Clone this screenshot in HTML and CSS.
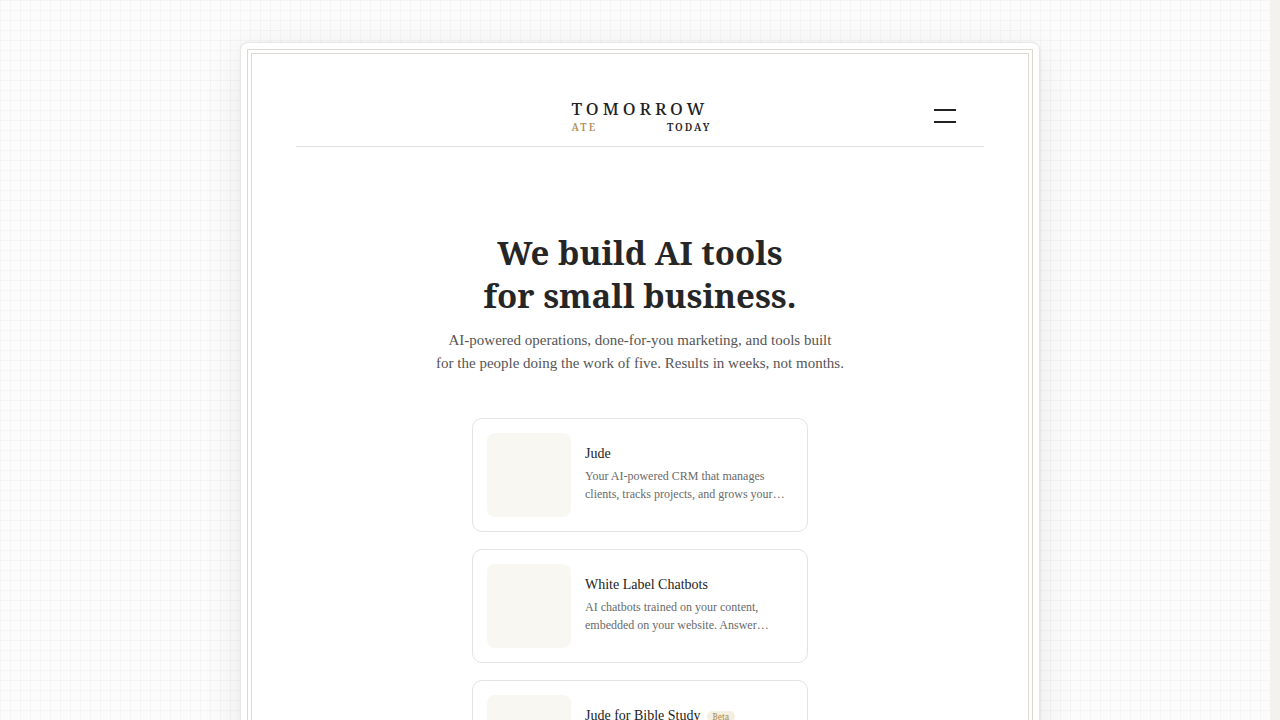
FILE: index.html
```html
<!DOCTYPE html>
<html lang="en">
<head>
<meta charset="utf-8">
<title>Tomorrow Today</title>
<link rel="stylesheet" href="styles.css">
</head>
<body>
<div class="page">
  <div class="sheet">
    <div class="frame-outer">
      <div class="frame-inner">
        <header class="header">
          <div class="header-spacer"></div>
          <a class="logo" href="#">
            <span class="logo-main">TOMORROW</span>
            <span class="logo-sub"><span class="logo-ate">ATE</span><span class="logo-today">TODAY</span></span>
          </a>
          <button class="menu" aria-label="Menu">
            <span class="menu-line"></span>
            <span class="menu-line"></span>
          </button>
        </header>
        <section class="hero">
          <h1 class="hero-title">We build AI tools<br>for small business.</h1>
          <p class="hero-text">AI-powered operations, done-for-you marketing, and tools built<br>for the people doing the work of five. Results in weeks, not months.</p>
        </section>
        <section class="products">
          <a class="product" href="#">
            <div class="product-thumb"></div>
            <div class="product-body">
              <div class="product-title">Jude</div>
              <div class="product-desc">Your AI-powered CRM that manages clients, tracks projects, and grows your business on autopilot.</div>
            </div>
          </a>
          <a class="product" href="#">
            <div class="product-thumb"></div>
            <div class="product-body">
              <div class="product-title">White Label Chatbots</div>
              <div class="product-desc">AI chatbots trained on your content, embedded on your website. Answer questions around the clock.</div>
            </div>
          </a>
          <a class="product" href="#">
            <div class="product-thumb"></div>
            <div class="product-body">
              <div class="product-title">Jude for Bible Study <span class="badge">Beta</span></div>
              <div class="product-desc">A study companion for scripture, notes, and reflection, all in one place.</div>
            </div>
          </a>
        </section>
      </div>
    </div>
  </div>
</div>
<div class="edge"></div>
</body>
</html>
```

FILE: styles.css
```css
* { box-sizing: border-box; }

html, body { margin: 0; padding: 0; }

body {
  background-color: #fcfcfc;
  background-image:
    linear-gradient(to right, rgba(0,0,0,0.028) 1px, transparent 1px),
    linear-gradient(to bottom, rgba(0,0,0,0.028) 1px, transparent 1px);
  background-size: 10px 10px;
  font-family: "Liberation Serif", "DejaVu Serif", serif;
  color: #222;
  height: 720px;
  overflow: hidden;
}

.page {
  display: flex;
  justify-content: center;
  padding-top: 42px;
}

.sheet {
  width: 800px;
  background: #fff;
  border: 1px solid #e6e6e3;
  border-radius: 8px;
  padding: 6px;
  box-shadow: 0 8px 40px rgba(0,0,0,0.08), 0 1px 4px rgba(0,0,0,0.04);
}

.frame-outer {
  border: 1px solid #dcdacf;
  padding: 3px;
}

.frame-inner {
  border: 1px solid #dcdacf;
  padding: 0 44px 40px;
  min-height: 900px;
}

.header {
  display: grid;
  grid-template-columns: 1fr auto 1fr;
  align-items: center;
  padding: 44px 0 13px;
  border-bottom: 1px solid #dddddd;
}

.logo {
  display: flex;
  flex-direction: column;
  text-decoration: none;
  color: #222;
  font-family: "Noto Serif", "DejaVu Serif", serif;
}

.logo-main {
  font-size: 17px;
  font-weight: 500;
  letter-spacing: 4px;
  line-height: 22px;
}

.logo-sub {
  display: flex;
  justify-content: space-between;
  font-size: 10px;
  font-weight: 600;
  letter-spacing: 2px;
  line-height: 12px;
  margin-top: 1px;
}

.logo-ate { color: #b0925a; }
.logo-today { color: #222; margin-right: -3px; }

.menu {
  justify-self: end;
  margin-right: 28px;
  width: 22px;
  height: 14px;
  padding: 0;
  border: 0;
  background: none;
  display: flex;
  flex-direction: column;
  justify-content: space-between;
  cursor: pointer;
}

.menu-line {
  display: block;
  height: 2px;
  background: #222;
}

.hero {
  display: flex;
  flex-direction: column;
  align-items: center;
  text-align: center;
  padding-top: 84px;
}

.hero-title {
  margin: 0;
  font-family: "Noto Serif", "DejaVu Serif", serif;
  font-size: 33px;
  font-weight: 700;
  line-height: 43px;
  color: #262626;
}

.hero-text {
  margin: 12px 0 0;
  font-size: 15px;
  line-height: 23px;
  color: #555;
}

.products {
  display: flex;
  flex-direction: column;
  align-items: center;
  gap: 17px;
  margin-top: 43px;
}

.product {
  width: 336px;
  display: flex;
  gap: 14px;
  padding: 14px;
  border: 1px solid #e3e3e0;
  border-radius: 10px;
  background: #fff;
  text-decoration: none;
  color: inherit;
}

.product-thumb {
  flex: 0 0 84px;
  height: 84px;
  border-radius: 8px;
  background: #f8f7f2;
}

.product-body {
  min-width: 0;
  padding-top: 12px;
  padding-right: 8px;
}

.product-title {
  font-size: 14px;
  line-height: 18px;
  color: #222;
  display: flex;
  align-items: center;
  gap: 6px;
}

.badge {
  display: inline-block;
  font-family: "Noto Serif", "DejaVu Serif", serif;
  font-size: 8px;
  line-height: 11px;
  padding: 0 6px;
  border-radius: 6px;
  background: #f4efe0;
  color: #a8894f;
}

.product-desc {
  margin-top: 4px;
  font-size: 12px;
  line-height: 18px;
  color: #6a6a6a;
  display: -webkit-box;
  -webkit-line-clamp: 2;
  -webkit-box-orient: vertical;
  overflow: hidden;
}

.edge {
  position: fixed;
  top: 0;
  right: 0;
  width: 10px;
  height: 100%;
  background: #f4f2ee;
}
```
